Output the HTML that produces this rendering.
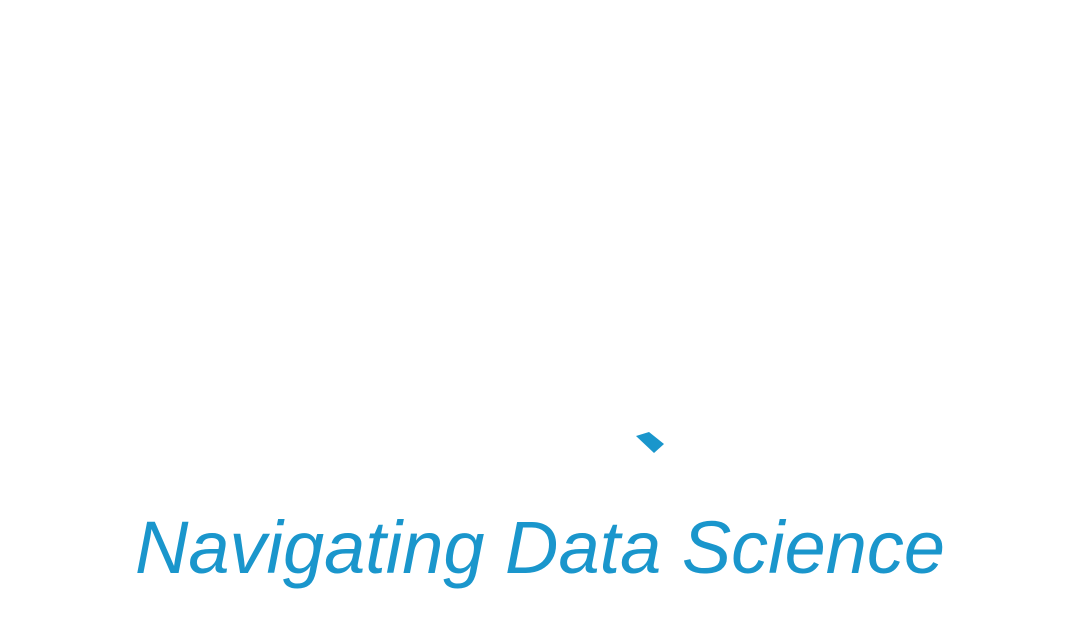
<!DOCTYPE html>
<html><head><meta charset="utf-8"><style>
html,body{margin:0;padding:0;background:#fff;width:1080px;height:640px;overflow:hidden}
</style></head><body>
<svg width="1080" height="640" viewBox="0 0 1080 640" xmlns="http://www.w3.org/2000/svg">
<polygon points="636,436 649,432 664,444 654,453" fill="#1a96cc"/>
<text x="135" y="573" font-family="Liberation Sans, sans-serif" font-style="italic" font-size="74" fill="#1a96cc" textLength="810" lengthAdjust="spacingAndGlyphs">Navigating Data Science</text>
</svg>
</body></html>
